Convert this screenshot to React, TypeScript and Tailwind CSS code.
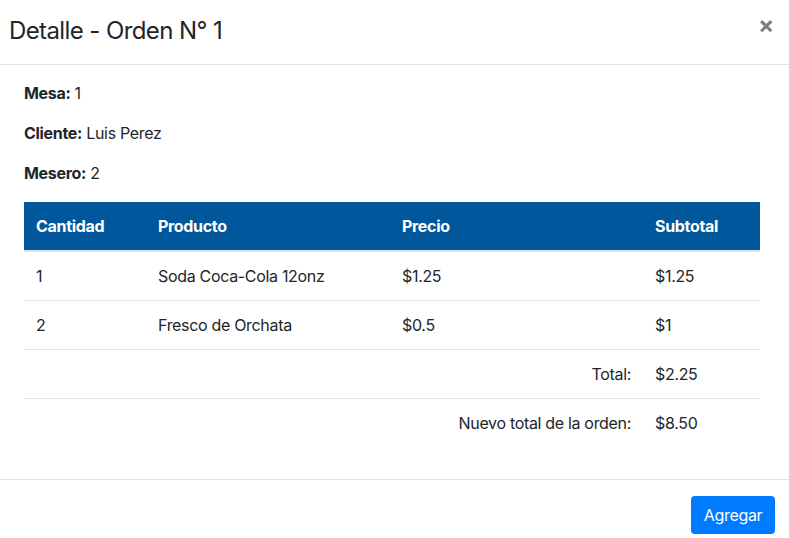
const items = [
  { cantidad: "1", producto: "Soda Coca-Cola 12onz", precio: "$1.25", subtotal: "$1.25" },
  { cantidad: "2", producto: "Fresco de Orchata", precio: "$0.5", subtotal: "$1" },
];

const App = () => {
  return (
    <div
      className="w-[789px] h-[538px] bg-white text-[#212529] text-[16px] leading-[24px] tracking-[-0.02em]"
      style={{ fontFamily: "Inter, 'Liberation Sans', sans-serif" }}
    >
      {/* header */}
      <div className="flex h-[65px] items-center justify-between border-b border-[#dee2e6] pl-[9px] pr-[15px] pb-[3px]">
        <h4 className="text-[24px] leading-[29px] font-normal tracking-[-0.025em]">Detalle - Orden N° 1</h4>
        <button className="mt-[-12px] text-[24px] leading-none font-bold text-black opacity-50">×</button>
      </div>

      {/* body */}
      <div className="px-[24px] pt-[16px] pb-[32px]">
        <p className="mb-[16px]">
          <b>Mesa:</b> 1
        </p>
        <p className="mb-[16px]">
          <b>Cliente:</b> Luis Perez
        </p>
        <p className="mb-[16px]">
          <b>Mesero:</b> 2
        </p>

        <div className="w-[736px]">
          <div className="grid h-[51px] grid-cols-[122px_244px_253px_117px] items-center border-t border-white border-b-2 border-b-[#dee2e6] bg-[#01579b] font-bold text-white">
            <div className="px-[12px]">Cantidad</div>
            <div className="px-[12px]">Producto</div>
            <div className="px-[12px]">Precio</div>
            <div className="px-[12px]">Subtotal</div>
          </div>
          {items.map((it, i) => (
            <div
              key={i}
              className={`grid grid-cols-[122px_244px_253px_117px] items-center ${i > 0 ? "h-[49px] border-t border-[#dee2e6]" : "h-[48px]"}`}
            >
              <div className="px-[12px]">{it.cantidad}</div>
              <div className="px-[12px]">{it.producto}</div>
              <div className="px-[12px]">{it.precio}</div>
              <div className="px-[12px]">{it.subtotal}</div>
            </div>
          ))}
          <div className="grid h-[49px] grid-cols-[619px_117px] items-center border-t border-[#dee2e6]">
            <div className="px-[12px] text-right">Total:</div>
            <div className="px-[12px]">$2.25</div>
          </div>
          <div className="grid h-[49px] grid-cols-[619px_117px] items-center border-t border-[#dee2e6]">
            <div className="px-[12px] text-right">Nuevo total de la orden:</div>
            <div className="px-[12px]">$8.50</div>
          </div>
        </div>
      </div>

      {/* footer */}
      <div className="flex justify-end border-t border-[#dee2e6] pt-[16px] pr-[14px]">
        <button className="h-[38px] w-[84px] rounded-[4px] bg-[#007bff] text-white">Agregar</button>
      </div>
    </div>
  );
};

export default App;
